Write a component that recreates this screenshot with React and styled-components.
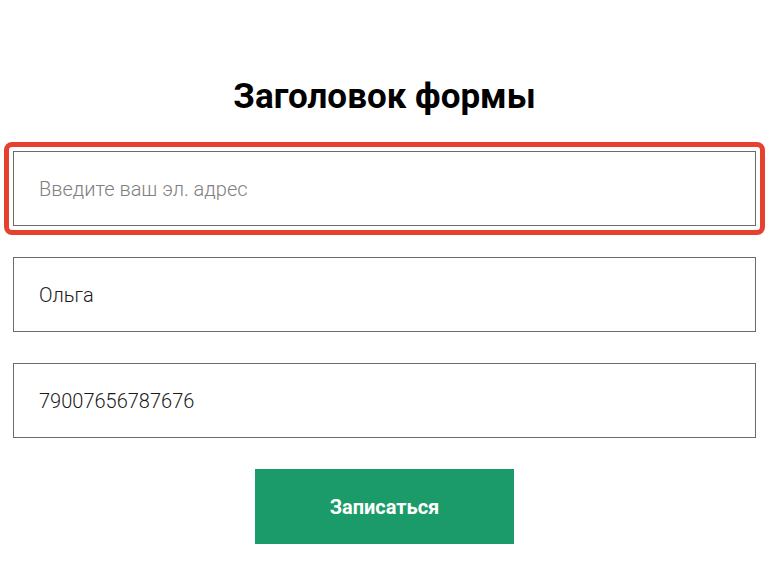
import React from "react";
import styled, { createGlobalStyle } from "styled-components";

const GlobalStyle = createGlobalStyle`
    body {
        margin: 0;
        background: #fff;
        font-family: Roboto, "Liberation Sans", Arial, sans-serif;
    }
`;

const Page = styled.div`
    padding: 77px 0 0 13px;
`;

const StyledForm = styled.form`
    width: 743px;
    display: flex;
    flex-direction: column;
    align-items: center;
`;

const FormTitle = styled.h2`
    margin: 0 0 34px;
    font-size: 35px;
    line-height: 40px;
    font-weight: 700;
    color: #000;
`;

const Field = styled.div`
    position: relative;
    width: 100%;
    margin-bottom: 31px;

    ${({ focused }) => focused && `
        &::after {
            content: "";
            position: absolute;
            inset: -9px;
            border: 5px solid #e6402f;
            border-radius: 8px;
            pointer-events: none;
        }
    `}
`;

const Input = styled.input`
    display: block;
    box-sizing: border-box;
    width: 100%;
    height: 75px;
    padding: 0 25px;
    border: 1px solid #6b6b6b;
    border-radius: 0;
    outline: none;
    font-family: Roboto, "Liberation Sans", Arial, sans-serif;
    font-size: 20px;
    font-weight: 300;
    color: #1a1a1a;
    background: #fff;

    &::placeholder {
        color: #808080;
    }
`;

const SubmitButton = styled.button`
    width: 259px;
    height: 75px;
    border: none;
    background: #1b9b69;
    color: #fff;
    font-family: Roboto, "Liberation Sans", Arial, sans-serif;
    font-size: 20px;
    font-weight: 700;
    cursor: pointer;
`;

const fields = [
    { name: "email", placeholder: "Введите ваш эл. адрес", value: "", focused: true },
    { name: "name", placeholder: "Имя", value: "Ольга" },
    { name: "phone", placeholder: "Телефон", value: "79007656787676" },
];

export default function App() {
    return (
        <Page>
            <GlobalStyle />
            <StyledForm onSubmit={(e) => e.preventDefault()}>
                <FormTitle>Заголовок формы</FormTitle>
                {fields.map((item) => (
                    <Field key={item.name} focused={item.focused}>
                        <Input name={item.name} placeholder={item.placeholder} defaultValue={item.value} />
                    </Field>
                ))}
                <SubmitButton type="submit">Записаться</SubmitButton>
            </StyledForm>
        </Page>
    );
}
